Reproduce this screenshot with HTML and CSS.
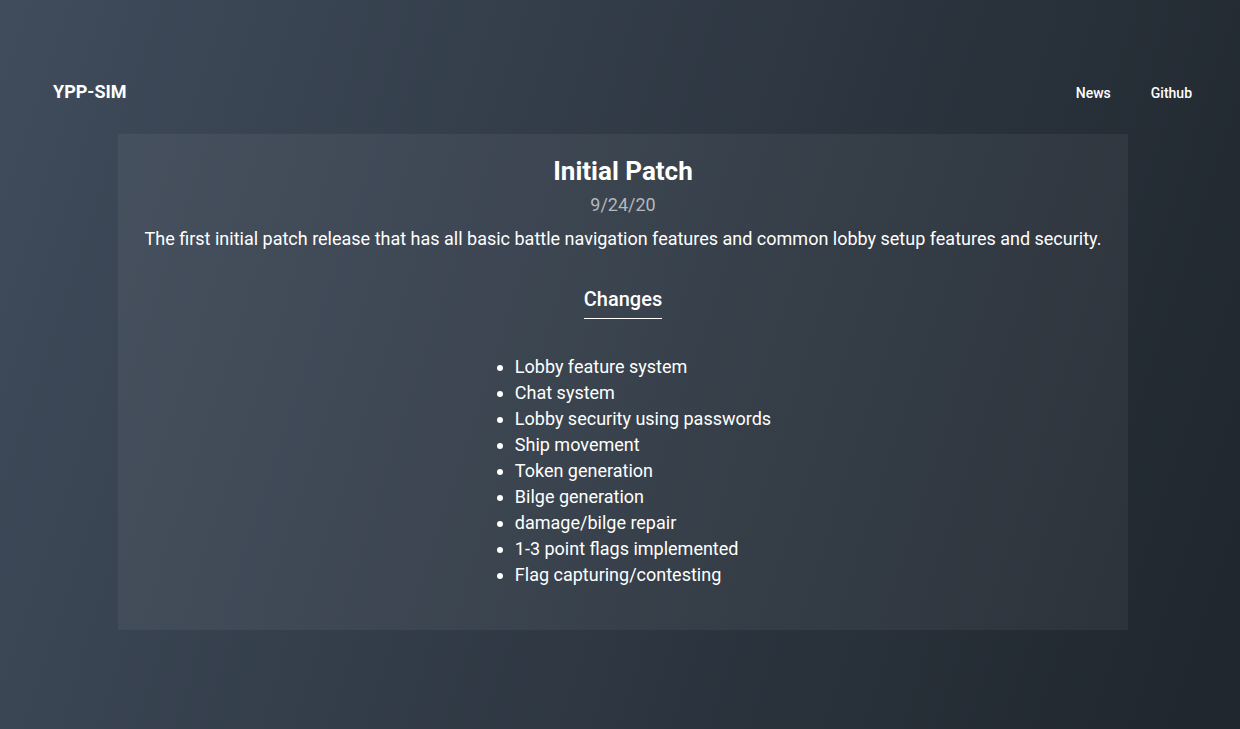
FILE: index.html
```html
<!DOCTYPE html>
<html lang="en">
<head>
<meta charset="utf-8">
<meta name="viewport" content="width=device-width, initial-scale=1">
<title>YPP-SIM</title>
<link rel="stylesheet" href="styles.css">
</head>
<body>
<header class="navbar">
  <a class="brand" href="#">YPP-SIM</a>
  <nav class="nav-links">
    <a class="nav-link" href="#news">News</a>
    <a class="nav-link" href="#github">Github</a>
  </nav>
</header>
<main class="news">
  <article class="patch">
    <h1 class="patch-title">Initial Patch</h1>
    <time class="patch-date" datetime="2020-09-24">9/24/20</time>
    <p class="patch-summary">The first initial patch release that has all basic battle navigation features and common lobby setup features and security.</p>
    <h2 class="patch-heading">Changes</h2>
    <ul class="patch-changes">
      <li>Lobby feature system</li>
      <li>Chat system</li>
      <li>Lobby security using passwords</li>
      <li>Ship movement</li>
      <li>Token generation</li>
      <li>Bilge generation</li>
      <li>damage/bilge repair</li>
      <li>1-3 point flags implemented</li>
      <li>Flag capturing/contesting</li>
    </ul>
  </article>
</main>
</body>
</html>
```
FILE: styles.css
```css
* {
  box-sizing: border-box;
}

body {
  margin: 0;
  min-height: 100vh;
  padding-top: 72px;
  font-family: Roboto, "Liberation Sans", sans-serif;
  font-size: 18px;
  line-height: 26px;
  color: #fff;
  background: linear-gradient(108deg, #404c5c, #20272e 96%);
}

.navbar {
  display: flex;
  align-items: baseline;
  justify-content: space-between;
  padding: 7px 48px 6px 53px;
}

.brand {
  font-size: 18px;
  font-weight: 700;
  color: #fff;
  text-decoration: none;
}

.nav-links {
  display: flex;
  gap: 40px;
}

.nav-link {
  font-size: 14px;
  font-weight: 500;
  color: #fff;
  text-decoration: none;
}

.news {
  display: flex;
  justify-content: center;
  margin: 22px 0 0 6px;
}

.patch {
  display: flex;
  flex-direction: column;
  align-items: center;
  padding: 20px 27px 42px;
  background: rgba(255, 255, 255, 0.05);
}

.patch-title {
  margin: 0;
  font-size: 26px;
  font-weight: 700;
  line-height: 34px;
}

.patch-date {
  margin-top: 4px;
  color: #b4b8bd;
}

.patch-summary {
  margin: 8px 0 0;
}

.patch-heading {
  margin: 33px 0 0;
  padding-bottom: 5px;
  border-bottom: 1px solid #fff;
  font-size: 20px;
  font-weight: 500;
  line-height: 28px;
}

.patch-changes {
  margin: 35px 0 0;
  padding-left: 40px;
}
```
